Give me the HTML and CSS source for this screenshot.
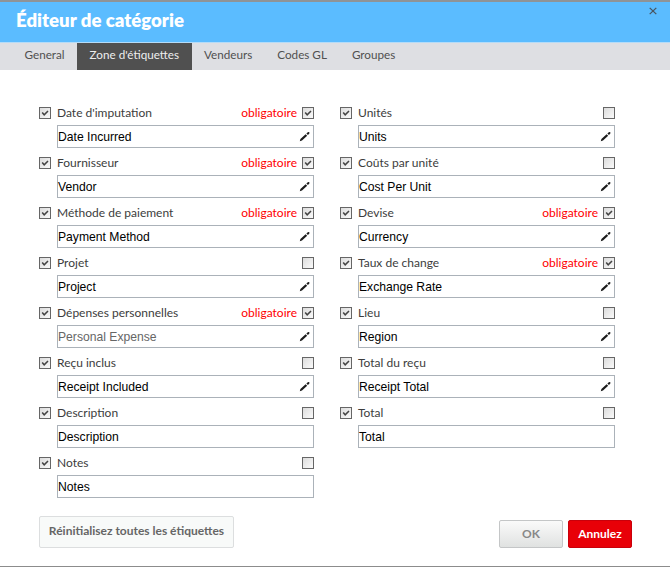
FILE: index.html
```html
<!DOCTYPE html>
<html lang="fr">

<head>
    <meta charset="UTF-8">
    <title>Éditeur de catégorie</title>
    <meta name="viewport" content="width=device-width, initial-scale=1">
    <link rel="stylesheet" href="styles.css">
</head>

<body>
    <svg class="sprite" aria-hidden="true">
        <symbol id="check" viewBox="0 0 12 12">
            <path d="M3.2 5.4 L5.2 7.8 L9 3.9" fill="none" stroke="#444" stroke-width="1.5" />
        </symbol>
        <symbol id="pencil" viewBox="0 0 11 11">
            <path d="M0.8 10.3 L1.4 8 L6.6 3.2 L8.2 4.8 L3 9.5 Z M7.4 2.5 L8.8 1.2 Q9.8 0.6 10.3 1.3 Q10.7 2 10.2 2.7 L8.9 4 Z" fill="#1c1c1c" />
        </symbol>
        <symbol id="close" viewBox="0 0 8 8">
            <path d="M0.7 0.9 L7.3 7.1 M7.3 0.9 L0.7 7.1" fill="none" stroke="#4a5560" stroke-width="1.3" />
        </symbol>
    </svg>

    <div class="dialog">
        <header class="title-bar">
            <h1>Éditeur de catégorie</h1>
            <svg class="close"><use href="#close" /></svg>
        </header>

        <nav class="tabs">
            <a class="tab">General</a>
            <a class="tab active">Zone d'étiquettes</a>
            <a class="tab">Vendeurs</a>
            <a class="tab">Codes GL</a>
            <a class="tab">Groupes</a>
        </nav>

        <main class="columns">
            <div class="column" id="left"></div>
            <div class="column" id="right"></div>
        </main>

        <footer class="actions">
            <button class="btn btn-reset">Réinitialisez toutes les étiquettes</button>
            <button class="btn btn-ok">OK</button>
            <button class="btn btn-cancel">Annulez</button>
        </footer>
    </div>

    <script>
        const left = [
            { label: "Date d'imputation", value: 'Date Incurred', required: true, edit: true },
            { label: 'Fournisseur', value: 'Vendor', required: true, edit: true },
            { label: 'Méthode de paiement', value: 'Payment Method', required: true, edit: true },
            { label: 'Projet', value: 'Project', edit: true },
            { label: 'Dépenses personnelles', value: 'Personal Expense', required: true, edit: true, muted: true },
            { label: 'Reçu inclus', value: 'Receipt Included', edit: true },
            { label: 'Description', value: 'Description' },
            { label: 'Notes', value: 'Notes' }
        ];

        const right = [
            { label: 'Unités', value: 'Units', edit: true },
            { label: 'Coûts par unité', value: 'Cost Per Unit', edit: true },
            { label: 'Devise', value: 'Currency', required: true, edit: true },
            { label: 'Taux de change', value: 'Exchange Rate', required: true, edit: true },
            { label: 'Lieu', value: 'Region', edit: true },
            { label: 'Total du reçu', value: 'Receipt Total', edit: true },
            { label: 'Total', value: 'Total' }
        ];

        function checkbox(checked) {
            return `<span class="checkbox">${checked ? '<svg><use href="#check" /></svg>' : ''}</span>`;
        }

        function renderFields(id, fields) {
            document.getElementById(id).innerHTML = fields.map(f => `
                <div class="field">
                    <div class="field-head">
                        ${checkbox(true)}
                        <span class="label">${f.label}</span>
                        ${f.required ? '<span class="required">obligatoire</span>' : ''}
                        ${checkbox(f.required)}
                    </div>
                    <div class="input${f.muted ? ' muted' : ''}">
                        <span>${f.value}</span>
                        ${f.edit ? '<svg class="pencil"><use href="#pencil" /></svg>' : ''}
                    </div>
                </div>`).join('');
        }

        renderFields('left', left);
        renderFields('right', right);
    </script>
</body>

</html>
```
FILE: styles.css
```css
* {
    box-sizing: border-box;
}

body {
    margin: 0;
    background-color: white;
    font-family: Lato, sans-serif;
    font-size: 12px;
    color: #3c3c3c;
}

.sprite {
    display: none;
}

.dialog {
    display: flex;
    flex-direction: column;
    height: 567px;
    border-top: 2px solid #8f9396;
    border-bottom: 1px solid #8c8c8c;
}

.title-bar {
    display: flex;
    justify-content: space-between;
    height: 41px;
    padding: 0 13px 0 16px;
    background-color: #5bbcff;
    border-bottom: 1px solid #b5dcf8;
}

h1 {
    margin: 0;
    font-size: 18.6px;
    font-weight: 800;
    line-height: 37px;
    color: white;
}

.close {
    width: 8px;
    height: 8px;
    margin-top: 5px;
}

.tabs {
    display: flex;
    height: 27px;
    padding-left: 12px;
    background-color: #dedfe3;
    font-size: 11.7px;
}

.tab {
    padding: 0 12.5px;
    line-height: 22px;
    color: #505050;
}

.tab.active {
    background-color: #505050;
    color: #eee;
}

.columns {
    display: flex;
    gap: 26px;
    padding: 31px 0 0 39px;
}

.column {
    width: 275px;
}

.field {
    height: 50px;
}

.field-head {
    display: flex;
    align-items: center;
    height: 24px;
}

.label,
.required {
    padding-bottom: 2px;
    white-space: nowrap;
}

.label {
    margin: 0 auto 0 6px;
}

.required {
    margin-right: 5px;
    color: #ff0000;
}

.checkbox {
    width: 12px;
    height: 12px;
    border: 1px solid #666;
    background: linear-gradient(135deg, #dcdcdc, #fafafa);
}

.checkbox svg {
    display: block;
    width: 12px;
    height: 12px;
    margin: -1px;
}

.input {
    display: flex;
    align-items: center;
    justify-content: space-between;
    height: 23px;
    margin-left: 18px;
    padding: 0 3px 0 0;
    border: 1px solid #abb2b9;
    font-family: "Liberation Sans", sans-serif;
    font-size: 12.15px;
    color: black;
}

.muted {
    color: #666;
}

.pencil {
    width: 11px;
    height: 11px;
}

.actions {
    display: flex;
    align-items: flex-end;
    margin-top: auto;
    padding: 0 38px 18px 39px;
}

.btn {
    height: 28px;
    padding: 0 0 2px;
    border-radius: 2px;
    font-family: Lato, sans-serif;
    font-size: 12px;
    font-weight: bold;
    white-space: nowrap;
}

.btn-reset {
    width: 195px;
    height: 32px;
    margin-right: auto;
    padding-bottom: 4px;
    border: 1px solid #dcdedf;
    background-color: #f8faf9;
    color: #666;
}

.btn-ok {
    width: 64px;
    margin-right: 5px;
    border: 1px solid #c4c6c7;
    background: linear-gradient(#fafafa, #e0e2e1);
    color: #888;
}

.btn-cancel {
    width: 64px;
    border: 1px solid #c9000b;
    background-color: #e80008;
    color: white;
}
```
